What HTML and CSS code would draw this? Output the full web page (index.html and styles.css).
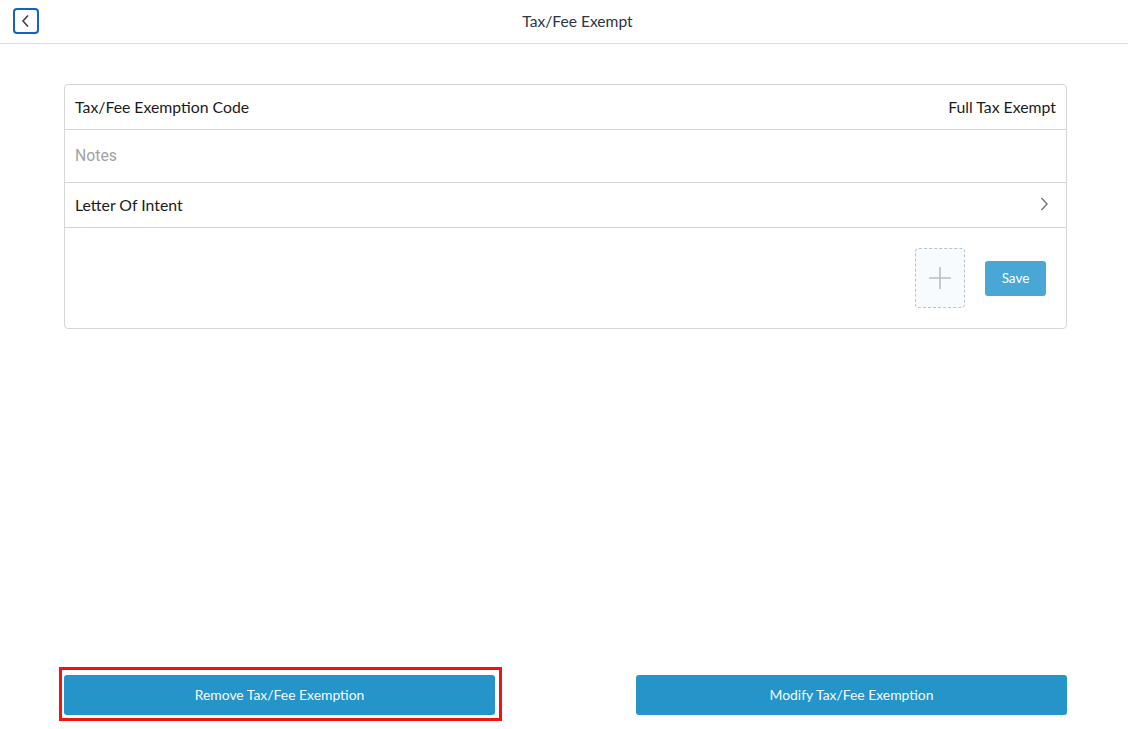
FILE: index.html
```html
<!DOCTYPE html>
<html lang="en">
  <head>
    <meta charset="UTF-8" />
    <meta name="viewport" content="width=device-width, initial-scale=1.0" />
    <title>Tax/Fee Exempt</title>
    <link rel="stylesheet" href="styles.css">
  </head>
  <body>
    <div class="page">
      <div class="topBar">
        <button class="backBtn">
          <svg width="12" height="14" viewBox="0 0 12 14">
            <path d="M8 1.5 L3 7 L8 12.5" fill="none" stroke="#3b4350" stroke-width="1.6" />
          </svg>
        </button>
        <p class="title">Tax/Fee Exempt</p>
      </div>

      <div class="content">
        <div class="card">
          <div class="row">
            <span>Tax/Fee Exemption Code</span>
            <span>Full Tax Exempt</span>
          </div>
          <div class="row notesRow">
            <input class="notes" type="text" placeholder="Notes" />
          </div>
          <div class="row arrowRow">
            <span>Letter Of Intent</span>
            <svg width="10" height="16" viewBox="0 0 10 16">
              <path d="M2.5 2 L8 8 L2.5 14" fill="none" stroke="#7a7a7a" stroke-width="1.5" />
            </svg>
          </div>
          <div class="uploadRow">
            <div class="addBox">
              <svg width="24" height="24" viewBox="0 0 24 24">
                <path d="M12 1 V23 M1 12 H23" stroke="#b9bcc0" stroke-width="1.6" />
              </svg>
            </div>
            <button class="saveBtn">Save</button>
          </div>
        </div>
      </div>

      <div class="footer">
        <button class="bigBtn highlighted">Remove Tax/Fee Exemption</button>
        <button class="bigBtn">Modify Tax/Fee Exemption</button>
      </div>
    </div>
  </body>
</html>
```

FILE: styles.css
```css
* {
  margin: 0px;
  padding: 0px;
  box-sizing: border-box;
}
body {
  font-family: Lato, "Liberation Sans", sans-serif;
  background: #ffffff;
  color: #1b1b1b;
}
.page {
  height: 729px;
  display: flex;
  flex-direction: column;
}

.topBar {
  height: 44px;
  border-bottom: 1px solid #dedede;
  display: flex;
  align-items: center;
  padding-left: 13px;
}
.backBtn {
  width: 26px;
  height: 26px;
  border: 2px solid #1662bf;
  border-radius: 4px;
  background: white;
  display: flex;
  align-items: center;
  justify-content: center;
  margin-top: -2px;
}
.title {
  flex: 1;
  text-align: center;
  font-size: 15.6px;
  color: #2b3646;
  padding-right: 12px;
  margin-top: -2px;
}

.content {
  flex: 1;
  padding: 40px 61px 0 64px;
}
.card {
  border: 1px solid #d6d6d6;
  border-radius: 4px;
}
.row {
  height: 45px;
  display: flex;
  align-items: center;
  justify-content: space-between;
  padding: 0 10px 2px 10px;
  border-bottom: 1px solid #d6d6d6;
  font-size: 15.8px;
}
.arrowRow {
  padding-right: 17px;
}
.notesRow {
  height: 53px;
}
.notes {
  border: none;
  outline: none;
  width: 100%;
  font-family: Roboto, "Liberation Sans", sans-serif;
  font-size: 15.8px;
}
.notes::placeholder {
  color: #a3a3a3;
}
.uploadRow {
  height: 100px;
  display: flex;
  align-items: center;
  justify-content: flex-end;
  padding-right: 20px;
}
.addBox {
  width: 50px;
  height: 60px;
  border: 1px dashed #b6c3d1;
  border-radius: 4px;
  background: #f7fbfe;
  display: flex;
  align-items: center;
  justify-content: center;
}
.saveBtn {
  width: 61px;
  height: 35px;
  margin-left: 20px;
  border: none;
  border-radius: 3px;
  background: #48a7d4;
  color: white;
  font-family: Lato, sans-serif;
  font-size: 13.5px;
}

.footer {
  display: flex;
  justify-content: space-between;
  padding: 0 61px 14px 64px;
}
.bigBtn {
  width: 431px;
  height: 40px;
  border: none;
  border-radius: 3px;
  background: #2494c9;
  color: #f4f9fc;
  font-family: Lato, sans-serif;
  font-size: 13.9px;
  padding-bottom: 2px;
  position: relative;
}
.highlighted::after {
  content: "";
  position: absolute;
  top: -8px;
  left: -5px;
  right: -7px;
  bottom: -6px;
  border: 3px solid #f2120f;
}
```
